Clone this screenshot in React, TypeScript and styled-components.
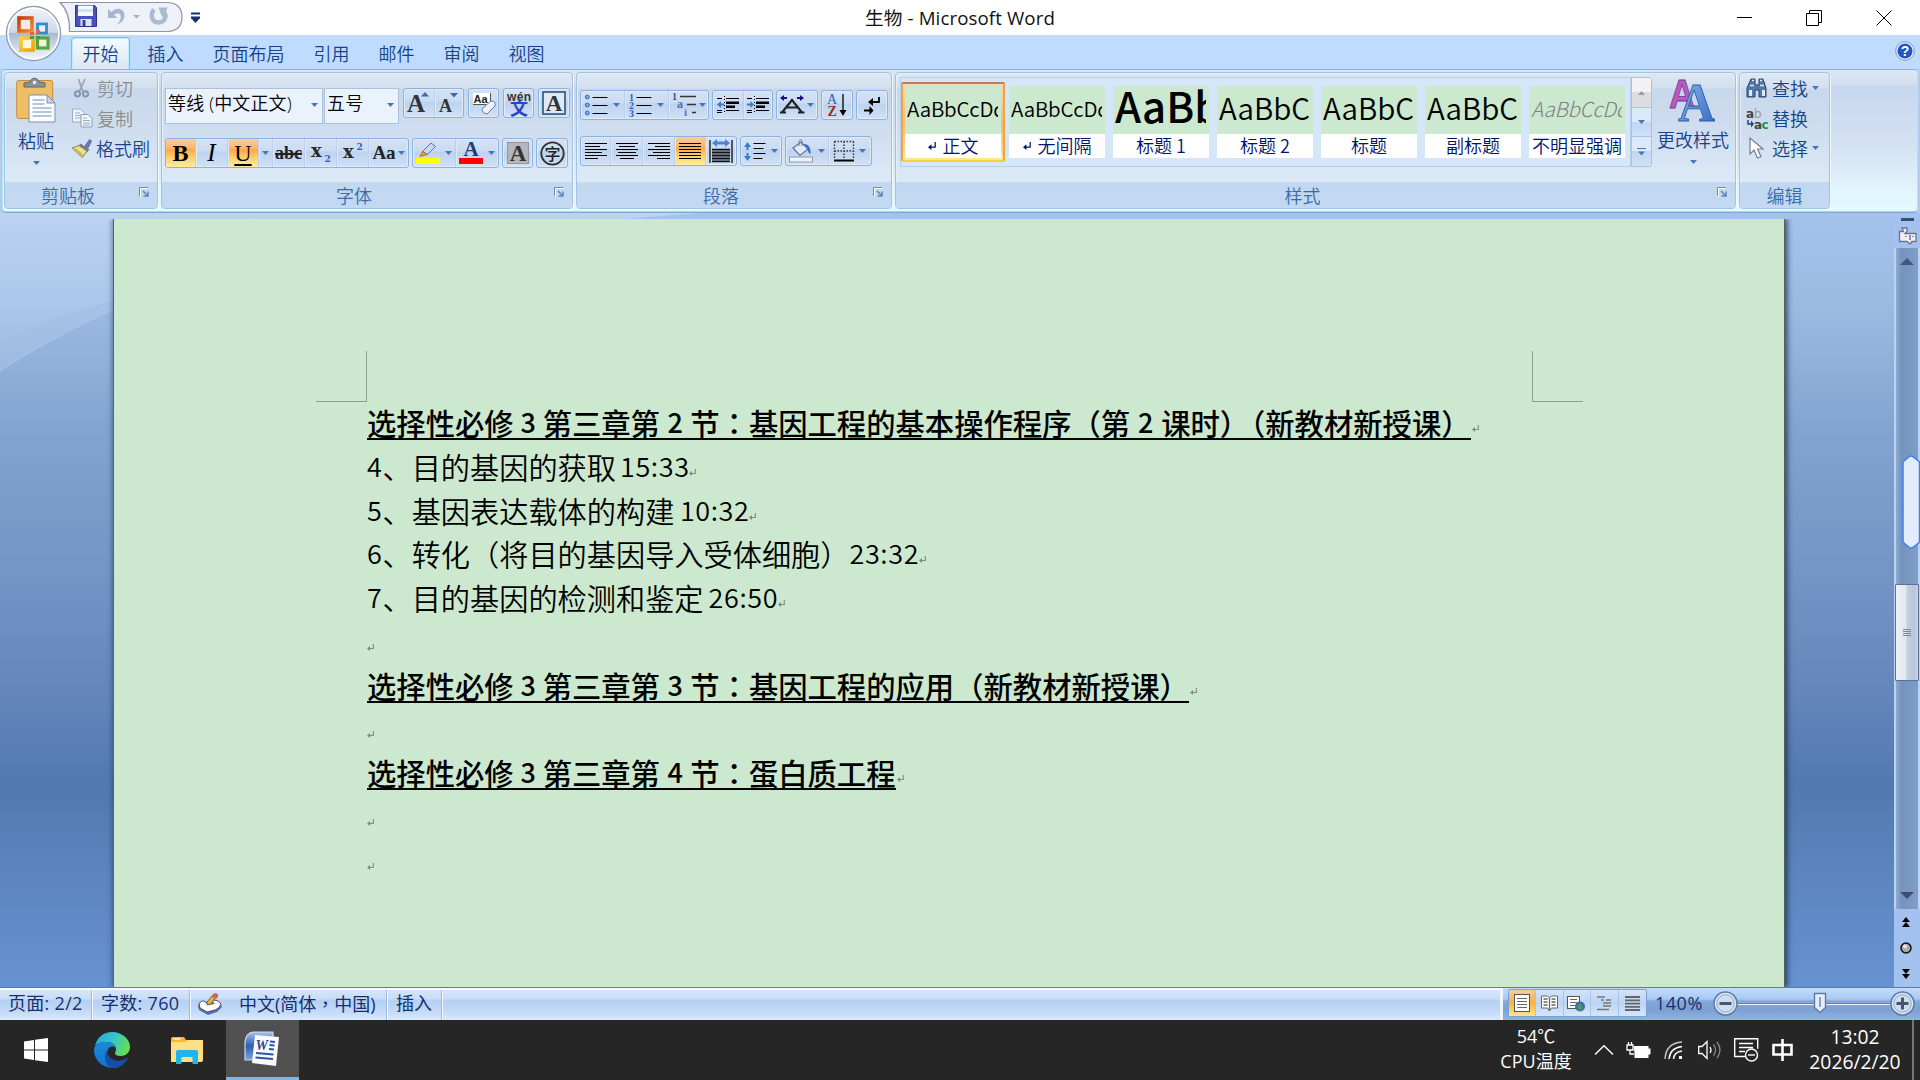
import React from 'react';
import styled, { createGlobalStyle, css } from 'styled-components';

const ui = `"Open Sans", "Noto Sans CJK SC", sans-serif`;
const cjk = `"Noto Sans CJK SC", "Noto Sans", sans-serif`;

const GlobalStyle = createGlobalStyle`
  * { box-sizing: border-box; }
  body { margin: 0; overflow: hidden; font-family: ${ui}; }
  svg { display: block; flex: none; overflow: visible; }
`;

const Screen = styled.div`
  position: relative;
  width: 1920px;
  height: 1080px;
  display: flex;
  flex-direction: column;
  overflow: hidden;
  background: #fff;
`;

/* ---------- title bar ---------- */
const TitleBar = styled.header`
  height: 35px;
  display: grid;
  grid-template-columns: 1fr 240px 1fr;
  background: #fff;
`;
const QuickAccess = styled.div`
  display: flex;
  align-items: flex-start;
  padding-left: 60px;
`;
const Title = styled.div`
  text-align: center;
  font: 18.7px/36px ${ui};
  letter-spacing: 0.1px;
  color: #111;
  white-space: nowrap;
`;
const WindowButtons = styled.div`
  display: flex;
  justify-content: flex-end;
  align-items: center;
  gap: 54px;
  padding: 0 28px 1px 0;
`;
const OfficeButton = styled.div`
  position: absolute;
  left: 5px;
  top: 5px;
  width: 57px;
  height: 57px;
`;

/* ---------- tabs ---------- */
const Tabs = styled.nav`
  height: 34px;
  display: flex;
  align-items: flex-end;
  gap: 6px;
  padding: 0 5px 0 71px;
  background: #bfdbff;
`;
const Tab = styled.div<{ $active?: boolean }>`
  height: 32px;
  padding: 0 10.5px;
  font: 18px/31px ${cjk};
  font-weight: 350;
  color: #15428b;
  border: 1px solid transparent;
  border-bottom: 0;
  ${(p) =>
    p.$active &&
    css`
      border-color: #8fb4e3;
      border-radius: 4px 4px 0 0;
      background: linear-gradient(#f4f9ff, #e6eff9 60%, #dbe6f4);
      box-shadow: inset 1px 1px 0 #b9f0f8, inset -1px 0 0 #b9f0f8;
    `}
`;
const HelpSlot = styled.div`
  margin-left: auto;
  height: 28px;
`;

/* ---------- ribbon ---------- */
const RibbonWrap = styled.section`
  height: 144px;
  padding: 0 2px;
  background: #b4cdee;
`;
const Ribbon = styled.div`
  height: 143px;
  display: flex;
  gap: 3px;
  padding: 2px 0 2px 1px;
  border: 1px solid #8db2e3;
  border-color: #8db2e3 #b5e6f3 #a5dbe8 #b5e6f3;
  border-radius: 4px;
  background: linear-gradient(#dce6f3 0, #d3dfef 15px, #c7d7ed 16px, #d3e1f2 75px, #e2f5fd 120px, #e3f8ff);
  box-shadow: 0 1px 1px #7ea2d0;
`;
const Group = styled.div<{ $w: number }>`
  width: ${(p) => p.$w}px;
  height: 137px;
  display: flex;
  flex-direction: column;
  border: 1px solid #a3c2e2;
  border-radius: 4px;
  box-shadow: 1px 1px 0 #eef7fe, inset 1px 1px 0 #e4eef9;
  background: linear-gradient(#dfe8f4 0, #d3dfee 15px, #c8d8ec 16px, #cddcee 50px, #dceaf7 110px);
  overflow: hidden;
`;
const GroupBody = styled.div<{ $pad?: string }>`
  flex: 1;
  display: flex;
  padding: ${(p) => p.$pad || '0'};
`;
const GroupLabel = styled.div`
  height: 26px;
  display: grid;
  grid-template-columns: 24px 1fr 24px;
  background: linear-gradient(#c1d8f0, #c2d9f1);
  font: 18px/27px ${cjk};
  font-weight: 350;
  color: #3e6aaa;
  text-align: center;
`;
const LabelText = styled.span`
  grid-column: 2;
  padding-right: 26px;
`;
const Column = styled.div<{ $gap?: number; $pad?: string; $w?: number }>`
  display: flex;
  flex-direction: column;
  gap: ${(p) => p.$gap || 0}px;
  padding: ${(p) => p.$pad || '0'};
  ${(p) => p.$w && `width: ${p.$w}px;`}
`;
const Row = styled.div<{ $gap?: number }>`
  display: flex;
  align-items: flex-start;
  gap: ${(p) => (p.$gap === undefined ? 3 : p.$gap)}px;
`;
const BigButton = styled.div<{ $w: number }>`
  width: ${(p) => p.$w}px;
  display: flex;
  flex-direction: column;
  align-items: center;
  font: 18px/26px ${cjk};
  font-weight: 350;
  color: #15428b;
  white-space: nowrap;
`;
const SmallButton = styled.div<{ $off?: boolean }>`
  height: 30px;
  display: flex;
  align-items: center;
  gap: 4px;
  font: 18px/30px ${cjk};
  font-weight: 350;
  white-space: nowrap;
  color: ${(p) => (p.$off ? '#8d8d8d' : '#15428b')};
`;
const Combo = styled.div<{ $w: number }>`
  width: ${(p) => p.$w}px;
  height: 36px;
  display: flex;
  justify-content: space-between;
  padding: 0 4px 0 2px;
  border: 1px solid #abc1de;
  background: #eaf2fb;
  font: 18px/28px "Open Sans", "Noto Sans CJK SC", sans-serif;
  font-weight: 350;
  letter-spacing: 0.15px;
  color: #000;
  white-space: nowrap;
  svg { margin-top: 14px; }
`;
const ButtonSet = styled.div`
  height: 30px;
  display: flex;
  border: 1px solid #8fb1de;
  border-radius: 3px;
  overflow: hidden;
  background: linear-gradient(#d3e1f3 0, #cbdcf2 12px, #bdd2ef 13px, #d0e1f7 28px);
  box-shadow: inset 0 0 0 1px #dfebf9;
`;
const Cell = styled.div<{ $w: number; $on?: boolean }>`
  width: ${(p) => p.$w}px;
  height: 28px;
  display: flex;
  align-items: center;
  justify-content: center;
  gap: 5px;
  & + & { border-left: 1px solid #b9cee9; box-shadow: inset 1px 0 0 #dde9f8; }
  ${(p) => p.$on && css`background: linear-gradient(#f7cfa0 0, #fdb76e 9px, #fda945 11px, #fed474 20px, #ffec9f 28px);`}
`;
const Glyph = styled.span<{ $size: number; $bold?: boolean; $italic?: boolean; $line?: string; $color?: string }>`
  font-family: "Liberation Serif", serif;
  font-size: ${(p) => p.$size}px;
  line-height: 26px;
  font-weight: ${(p) => (p.$bold ? 700 : 400)};
  font-style: ${(p) => (p.$italic ? 'italic' : 'normal')};
  text-decoration: ${(p) => p.$line || 'none'};
  text-decoration-thickness: 2px;
  text-underline-offset: 3px;
  color: ${(p) => p.$color || '#222'};
  white-space: nowrap;
`;

/* ---------- style gallery ---------- */
const Gallery = styled.div`
  display: flex;
  height: 90px;
  width: 731px;
  border: 1px solid #b7cfed;
  background: #d5e6f9;
`;
const StyleItem = styled.div<{ $on?: boolean }>`
  width: 104px;
  height: 80px;
  margin-top: 4px;
  padding: 4px;
  flex: none;
  border-radius: 2px;
  ${(p) =>
    p.$on &&
    css`
      padding: 2px;
      border: 2px solid;
      border-color: #b0825e #eba63f #fbcf3e #eba63f;
      background: linear-gradient(#fcd9ae, #fdb870 50%, #ffe78e);
    `}
`;
const Sample = styled.div<{ $size: number; $lh: number; $weight?: number; $italic?: boolean; $gray?: boolean; $track?: number }>`
  height: 48px;
  padding: 0 3px 0 2px;
  background: #cce8cf;
  span {
    display: block;
    overflow: hidden;
    width: 91px;
    height: 48px;
    font-family: ${cjk};
    font-size: ${(p) => p.$size}px;
    line-height: ${(p) => p.$lh}px;
    font-weight: ${(p) => p.$weight || 350};
    font-style: ${(p) => (p.$italic ? 'italic' : 'normal')};
    letter-spacing: ${(p) => p.$track || 0}px;
    color: ${(p) => (p.$gray ? '#808080' : '#000')};
  }
`;
const StyleName = styled.div`
  height: 24px;
  display: flex;
  align-items: center;
  justify-content: center;
  gap: 7px;
  background: #fff;
  font: 18px/22px ${cjk};
  font-weight: 350;
  color: #00156e;
  white-space: nowrap;
  span { height: 24px; }
`;
const GalleryNav = styled.div`
  width: 21px;
  height: 90px;
  display: grid;
  grid-template-rows: 30px 29px 30px;
  border: 1px solid #a9c3e6;
  border-radius: 0 3px 3px 0;
`;
const NavCell = styled.div<{ $off?: boolean }>`
  display: flex;
  align-items: center;
  justify-content: center;
  border-bottom: 1px solid #a9c3e6;
  background: ${(p) => (p.$off ? 'linear-gradient(#f2f2f3 50%, #dcdddf 50%)' : 'linear-gradient(#dbe9fa 50%, #c1d6f1 50%, #cfe0f6)')};
`;

/* ---------- workspace ---------- */
const Workspace = styled.main`
  position: relative;
  height: 774px;
  display: flex;
  padding-left: 113px;
  background: linear-gradient(#a4c2ec 0, #9dbae2 90px, #83a4d1 215px, #7293c4 370px, #6486ba 480px, #5b80b7 520px, #527ab0 575px, #5b84bc 650px, #6692d1 774px);
`;
const Curves = styled.svg`
  position: absolute;
  left: 0;
  top: 0;
`;
const Paper = styled.article`
  position: relative;
  width: 1672px;
  height: 768px;
  margin-top: 6px;
  padding: 181px 0 0 253px;
  background: #cce8cf;
  border-left: 1px solid #53646f;
  border-right: 1px solid #55605a;
  box-shadow: 3px 0 5px rgba(20, 40, 70, 0.65), -2px 0 4px rgba(30, 60, 110, 0.35);
  clip-path: inset(0 -12px 0 -8px);
`;
const Corner = styled.div<{ $right?: boolean }>`
  position: absolute;
  top: 132px;
  left: ${(p) => (p.$right ? 1418 : 202)}px;
  width: 51px;
  height: 51px;
  border-bottom: 1px solid #8ba18d;
  ${(p) => (p.$right ? 'border-left: 1px solid #8ba18d;' : 'border-right: 1px solid #8ba18d;')}
`;
const Line = styled.p`
  margin: 0;
  height: 43.75px;
  display: flex;
  font: 29.2px/44.5px ${cjk};
  font-weight: 350;
  color: #000;
  white-space: pre;
`;
const Head = styled.strong`
  height: 40px;
  display: flex;
  font-size: 29.33px;
  font-weight: 500;
  border-bottom: 2px solid #000;
`;
const Fixed = styled.span<{ $w: number; $align?: string; $size?: number; $jp?: boolean }>`
  width: ${(p) => p.$w}px;
  display: flex;
  justify-content: ${(p) => p.$align || 'center'};
  ${(p) => p.$size && `font-size: ${p.$size}px;`}
  ${(p) => p.$jp && `font-family: "Noto Sans CJK JP", sans-serif;`}
`;
const Time = styled.span<{ $gap: number }>`
  width: ${(p) => 68 + p.$gap}px;
  padding-left: ${(p) => p.$gap}px;
  font-size: 27px;
  letter-spacing: 0.6px;
`;
const MarkSlot = styled.span`
  padding: 25px 0 0 1px;
`;

/* ---------- vertical scroll bar ---------- */
const ScrollColumn = styled.aside`
  position: relative;
  margin-left: auto;
  width: 26px;
  display: flex;
  flex-direction: column;
  align-items: center;
  background: #a4c2ef;
`;
const ScrollTop = styled.div`
  height: 35px;
  padding-top: 5px;
  display: flex;
  flex-direction: column;
  align-items: center;
  gap: 6px;
`;
const Track = styled.div`
  width: 26px;
  height: 661px;
  display: flex;
  flex-direction: column;
  align-items: center;
  padding: 10px 0;
  border: solid #b9d3f6;
  border-width: 0 2px;
  background: linear-gradient(90deg, #8fabd0, #7593bd 25%, #7f9dc6);
`;
const Thumb = styled.div`
  width: 24px;
  height: 97px;
  margin: 319px 0 auto;
  display: flex;
  align-items: center;
  justify-content: center;
  border: 1px solid #5f6f98;
  border-radius: 1px;
  background: linear-gradient(90deg, #eef0f4, #e1e8ef 45%, #c3d0de 50%, #b7c6da 85%, #ccd5e4);
`;
const ScrollFoot = styled.div`
  flex: 1;
  display: flex;
  flex-direction: column;
  align-items: center;
  gap: 15px;
  padding: 8px 2px 0 0;
`;
const SidePill = styled.svg`
  position: absolute;
  left: 8px;
  top: 242px;
`;

/* ---------- status bar ---------- */
const StatusBar = styled.footer`
  height: 33px;
  display: flex;
  border-top: 1px solid #567db0;
  background: #cfe1f7;
`;
const StatusLeft = styled.div`
  width: 1500px;
  display: flex;
  border-top: 2px solid #f6faff;
  background: linear-gradient(#d5e5fa 0, #c9ddf8 9px, #b5d0f4 10px, #c4daf7 22px, #d9e9fc 30px);
`;
const StatusItem = styled.div<{ $w: number; $pad?: number }>`
  width: ${(p) => p.$w}px;
  padding: 0 0 3px ${(p) => (p.$pad === undefined ? 9 : p.$pad)}px;
  display: flex;
  align-items: center;
  gap: 17px;
  border-right: 1px solid #9bbbe3;
  box-shadow: 1px 0 0 #f2f8ff;
  font: 18px/27px ${ui};
  letter-spacing: ${(p) => (p.$w < 100 && p.$w > 60 ? 0.3 : 0)}px;
  color: #15306e;
  white-space: nowrap;
`;
const CenteredComma = styled.span`
  font-family: "Noto Sans CJK TC", sans-serif;
`;
const StatusRight = styled.div`
  flex: 1;
  display: flex;
  align-items: center;
  padding: 0 5px 2px 5px;
  border-left: 3px solid #edf5ff;
  background: linear-gradient(#c3dcfb 0, #a9c9f3 11px, #85a9dc 13px, #7d9fd2 22px, #8fb4e2 32px);
`;
const ViewSet = styled.div`
  height: 28px;
  width: 139px;
  display: grid;
  grid-template-columns: repeat(5, 1fr);
  border: 1px solid #7b9fd3;
  border-radius: 2px;
  background: linear-gradient(#d3e4fa, #bcd4f4 50%, #d5e6fb);
`;
const ViewCell = styled.div<{ $on?: boolean }>`
  display: flex;
  align-items: center;
  justify-content: center;
  border-right: 1px solid #a9c4ea;
  &:last-child { border-right: 0; }
  ${(p) => p.$on && css`background: linear-gradient(#f0cfa2, #f3b659 40%, #f8b53a 50%, #ffe395);`}
`;
const ZoomText = styled.span`
  width: 66px;
  padding-left: 8px;
  font: 18px/28px ${ui};
  letter-spacing: 0.5px;
  color: #15306e;
`;
const ZoomSlider = styled.div`
  display: flex;
  align-items: center;
`;

/* ---------- taskbar ---------- */
const Taskbar = styled.div`
  height: 60px;
  display: flex;
  background: #262626;
  color: #fff;
`;
const Task = styled.div<{ $w: number; $on?: boolean; $pad?: string }>`
  width: ${(p) => p.$w}px;
  display: flex;
  align-items: center;
  justify-content: center;
  padding: ${(p) => p.$pad || '0'};
  ${(p) => p.$on && 'background: #505050; border-bottom: 3px solid #76b9ed;'}
`;
const Tray = styled.div`
  margin-left: auto;
  display: flex;
  align-items: center;
`;
const TrayText = styled.div<{ $w: number; $size: number }>`
  width: ${(p) => p.$w}px;
  padding-bottom: 2px;
  text-align: center;
  font: ${(p) => p.$size}px/25px ${ui};
  white-space: nowrap;
`;
const TrayIcons = styled.div`
  display: flex;
  align-items: center;
  width: 198px;
  margin: 0 5px 0 19px;
  justify-content: space-between;
`;
const ShowDesktop = styled.div`
  width: 8px;
  height: 60px;
  border-left: 2px solid #757575;
`;

/* ---------- drawings ---------- */
const Caret = ({ color = '#4a76b8', up = false }: { color?: string; up?: boolean }) => (
  <svg width="7" height="4" viewBox="0 0 7 4">
    <path d={up ? 'M0 4h7L3.5 0z' : 'M0 0h7L3.5 4z'} fill={color} />
  </svg>
);

const Pilcrow = ({ color = '#808a82', size = 7 }: { color?: string; size?: number }) => (
  <svg width={size} height={size} viewBox="0 0 7 7">
    <path d="M6.300 0v4.500H1" stroke={color} fill="none" strokeWidth="1.100" />
    <path d="M0 4.500L3 2v5z" fill={color} />
  </svg>
);

const Launcher = () => (
  <svg width="11" height="11" viewBox="0 0 11 11" style={{ margin: '5px 0 0 6px' }}>
    <path d="M.5 9V.5H9" fill="none" stroke="#6a8dbb" />
    <path d="M1.500 9.500v-8H9" fill="none" stroke="#fff" />
    <path d="M4 4l4 4M9 4.500V9H4.500" fill="none" stroke="#5d84b8" strokeWidth="1.500" />
  </svg>
);

const Lines = ({ rows, color = '#000', w = 22 }: { rows: [number, number][]; color?: string; w?: number }) => (
  <svg width={w} height="17" viewBox={`0 0 ${w} 17`} shapeRendering="crispEdges">
    {rows.map(([a, b], i) => (
      <rect key={i} x={a} y={i * 3} width={b - a} height="1.2" fill={color} />
    ))}
  </svg>
);

const OfficeLogo = () => (
  <svg width="57" height="57" viewBox="0 0 57 57">
    <defs>
      <linearGradient id="orb" x1="0" y1="0" x2="0" y2="1">
        <stop offset="0" stopColor="#f4f6f9" />
        <stop offset=".48" stopColor="#ccd6e4" />
        <stop offset=".5" stopColor="#a9bbd4" />
        <stop offset="1" stopColor="#f6fafe" />
      </linearGradient>
      <linearGradient id="lr" x1="0" y1="0" x2="1" y2="1"><stop offset="0" stopColor="#c9370b" /><stop offset="1" stopColor="#f58b2e" /></linearGradient>
      <linearGradient id="ly" x1="0" y1="0" x2="1" y2="1"><stop offset="0" stopColor="#fcd02c" /><stop offset="1" stopColor="#f2a20d" /></linearGradient>
    </defs>
    <circle cx="28.500" cy="28.500" r="27" fill="url(#orb)" stroke="#8a9bb5" strokeWidth="1.400" />
    <circle cx="28.500" cy="28.500" r="25.500" fill="none" stroke="#fff" strokeWidth="1.600" />
    <rect x="14" y="13" width="13" height="13" fill="#f5ebe6" stroke="url(#lr)" strokeWidth="3.600" />
    <rect x="32.500" y="19" width="9" height="9" fill="#e6f3fb" stroke="#2a8fd0" strokeWidth="2.800" />
    <rect x="16" y="33" width="12" height="12" fill="#fdf6df" stroke="url(#ly)" strokeWidth="3.600" />
    <rect x="32.500" y="33" width="10.500" height="10" fill="#eaf5e2" stroke="#5aa53a" strokeWidth="3.200" />
    <path d="M25 27h4v3h-4zM31 25h4v3h-4z" fill="#e8662a" />
    <path d="M25 31h4v3h-4zM31 31h4v3h-4z" fill="#3d9a5f" />
  </svg>
);

const QuickIcons = () => (
  <svg width="146" height="34" viewBox="60 0 146 34">
    <path d="M60 2.500H168q14 1 14 14.500T168 31.500H69.500Q70 12 60 2.500z" fill="#eef2f8" stroke="#8b95a3" strokeWidth="1.200" />
    <path d="M75.500 5.500h19l2 2v19H75.500z" fill="#4a50bc" stroke="#2f3588" />
    <rect x="78" y="5.500" width="15" height="10.500" fill="#f5f8fc" />
    <path d="M78 9h15v3H78z" fill="#cfe0f2" />
    <rect x="80.500" y="19" width="11" height="7" fill="#dfe4ee" />
    <rect x="82.500" y="20" width="3" height="6" fill="#3a3f8f" />
    <path d="M108 9v9h9.500l-3.300-3c3.500-3.500 7-1.500 6.500 2.500-.3 3-2.200 5.500-4.700 7.500 5-1.500 8.500-5 8.500-9.500 0-7-8-9-13-3.500z" fill="#a5b8d0" />
    <path d="M133 15h7l-3.500 3.500z" fill="#a8afb9" />
    <path d="M154 9.500c-4.500 5.500-2 13 4.500 13s9-6.500 5-11" fill="none" stroke="#a9bbd2" strokeWidth="4.400" />
    <path d="M158.500 7.500h9l-1.500 4-4 5.500z" fill="#a9bbd2" />
    <path d="M191 13.500h9M191 17.500h9" stroke="#15306e" strokeWidth="2" />
    <path d="M191 18h9l-4.500 5z" fill="#15306e" />
  </svg>
);

const PasteIcon = () => (
  <svg width="40" height="45" viewBox="0 0 40 45">
    <rect x=".7" y="2.500" width="36" height="38" rx="2" fill="#eebf62" stroke="#c08f3e" />
    <path d="M8 9V5l6-1c1-5 8-5 9 0l6 1v4z" fill="#8c939e" stroke="#5d646f" />
    <circle cx="18.500" cy="4.500" r="1.700" fill="#f5f5f5" />
    <path d="M13 17h18l8 8v19H13z" fill="#fbfcff" stroke="#7c8fb5" />
    <path d="M31 17v8h8z" fill="#c9d6ea" stroke="#7c8fb5" />
    <path d="M16.500 22h12M16.500 26h12M16.500 30h19M16.500 34h19M16.500 38h19" stroke="#9fb3d0" strokeWidth="1.300" />
  </svg>
);

const CutIcon = () => (
  <svg width="15" height="20" viewBox="0 0 15 20" fill="none">
    <path d="M4.500 1l4.500 13M11 1L5.500 13" stroke="#9aa6b8" strokeWidth="1.800" />
    <circle cx="3.500" cy="15.800" r="2.600" stroke="#8496b0" strokeWidth="2" />
    <circle cx="11.500" cy="15.800" r="2.600" stroke="#8496b0" strokeWidth="2" />
  </svg>
);

const CopyIcon = () => (
  <svg width="21" height="20" viewBox="0 0 21 20">
    <path d="M.5 1h8l4 4v9H.500z" fill="#eef3fa" stroke="#9cacc5" />
    <path d="M3 5h5M3 7.500h7M3 10h6" stroke="#9cacc5" />
    <path d="M9 6.500h7l4 4v8.500H9z" fill="#f2f6fb" stroke="#8c9fbd" />
    <path d="M11 10h4M11 12.500h7M11 15h7M11 17h7" stroke="#9cacc5" />
  </svg>
);

const BrushIcon = () => (
  <svg width="20" height="19" viewBox="0 0 20 19">
    <path d="M13 7l4.500-6.500 2 1.500L16 9z" fill="#7376c9" stroke="#4a4f9c" strokeWidth=".8" />
    <path d="M8.500 4.500l9 6-2.500 3-9-6z" fill="#6f7b88" />
    <path d="M7 6.500l8 5.500-4.500 6.500L0 9z" fill="#ecdf96" stroke="#8f8243" />
    <path d="M3 9.500l8 7" stroke="#c3ad4d" strokeWidth="1.600" />
  </svg>
);

const ClearFormat = () => (
  <svg width="24" height="24" viewBox="0 0 24 24">
    <path d="M1 2h17v11H1z" fill="#fff" />
    <path d="M18.500 2v10M1 13.500h13" fill="none" stroke="#555" />
    <text x="1.500" y="11.500" fontFamily="Liberation Sans" fontSize="11" fontWeight="700" fill="#222">Aa</text>
    <path d="M10 18l9-8q5 0 4 5l-8 8q-5-1-5-5z" fill="#eef1fa" stroke="#6b7aa6" />
  </svg>
);

const Phonetic = () => (
  <svg width="26" height="26" viewBox="0 0 26 26">
    <text x="1" y="11" fontFamily="Liberation Sans" fontSize="12" fontWeight="700" textLength="24" fill="#333">wén</text>
    <text x="4" y="25" fontFamily="Noto Sans CJK SC" fontSize="18" fontWeight="700" textLength="18" fill="#2c45c4">文</text>
  </svg>
);

const CharBorder = () => (
  <svg width="24" height="24" viewBox="0 0 24 24">
    <rect x="1" y="1" width="22" height="22" fill="#dfe8f5" stroke="#3d6186" strokeWidth="1.800" />
    <text x="12" y="20" textAnchor="middle" fontFamily="Liberation Serif" fontSize="23" fontWeight="700" fill="#333">A</text>
  </svg>
);

const CharShade = () => (
  <svg width="22" height="22" viewBox="0 0 22 22">
    <rect x=".5" y=".5" width="21" height="21" fill="#b5b6ba" stroke="#96979b" />
    <text x="11" y="19" textAnchor="middle" fontFamily="Liberation Serif" fontSize="23" fontWeight="700" fill="#333">A</text>
  </svg>
);

const CircledChar = () => (
  <svg width="25" height="25" viewBox="0 0 25 25">
    <circle cx="12.500" cy="12.500" r="11.200" fill="none" stroke="#333" strokeWidth="1.800" />
    <text x="12.500" y="18.500" textAnchor="middle" fontFamily="Noto Sans CJK SC" fontSize="16" fontWeight="500" fill="#222">字</text>
  </svg>
);

const GrowFont = ({ size, up }: { size: number; up?: boolean }) => (
  <svg width="24" height="24" viewBox="0 0 24 24">
    <text x={up ? 0 : 2} y={up ? 21 : 20.5} fontFamily="Liberation Serif" fontSize={size} fontWeight="700" fill="#333">A</text>
    <path d={up ? 'M14 5.500h8L18 1z' : 'M13 2h8l-4 4.500z'} fill="#3f66b0" />
  </svg>
);

const Highlighter = () => (
  <svg width="24" height="24" viewBox="0 0 24 24">
    <rect x="0" y="17" width="24" height="6" fill="#ff0" />
    <path d="M15 2l4.500 3.500-8 8-5-3z" fill="#c6d8f0" stroke="#5b77a6" />
    <path d="M6.500 10.500l5 3-7.500 1.800z" fill="#e9a640" stroke="#8d6425" strokeWidth=".8" />
  </svg>
);

const FontColor = () => (
  <svg width="24" height="24" viewBox="0 0 24 24">
    <rect x="0" y="17" width="24" height="6" fill="#f00" />
    <text x="12" y="15" textAnchor="middle" fontFamily="Liberation Serif" fontSize="21" fontWeight="700" fill="#1d3c7c">A</text>
  </svg>
);

const ListIcon = ({ numbered }: { numbered?: boolean }) => (
  <svg width="23" height="23" viewBox="0 0 23 23">
    {[3, 11, 19].map((y, i) => (
      <g key={y}>
        {numbered ? (
          <text x="0" y={y + 3.5} fontFamily="Liberation Serif" fontSize="10" fontWeight="700" fill="#2d62b8">{i + 1}</text>
        ) : (
          <circle cx="2.300" cy={y} r="1.900" fill="#7fb0ec" stroke="#2d62b8" />
        )}
        <path d={`M7.500 ${y + 0.5}h15`} stroke="#000" />
      </g>
    ))}
  </svg>
);

const MultiLevel = () => (
  <svg width="25" height="24" viewBox="0 0 25 24">
    <text x="0" y="7" fontFamily="Liberation Serif" fontSize="10" fontWeight="700" fill="#2d4f8c">1</text>
    <text x="5" y="15" fontFamily="Liberation Serif" fontSize="12" fontWeight="700" fill="#4d6ea8">a</text>
    <text x="12" y="23" fontFamily="Liberation Serif" fontSize="11" fontWeight="700" fill="#4d78c8">i</text>
    <path d="M8 3.500h16M15 11.500h9M20 19.500h4" stroke="#333" strokeWidth="1.600" />
  </svg>
);

const Indent = ({ out }: { out?: boolean }) => (
  <svg width="22" height="18" viewBox="0 0 22 18">
    <path d="M0 2.500h5M9 2.500h13M0 14.500h5M9 14.500h13M0 16.500h5" stroke="#000" strokeWidth="1.200" />
    <path d="M9 5.500h13v2.500H9zM9 9.500h9v2.500H9z" fill="#000" />
    <path d="M7.500 0v18" stroke="#000" strokeDasharray="1 2" />
    <path d={out ? 'M0 8.500l4-3.500v2.500h3v2H4V12z' : 'M7 8.500L3.500 5v2.500H0v2h3.500V12z'} fill="#3b7ad0" />
  </svg>
);

const AsianLayout = () => (
  <svg width="25" height="20" viewBox="0 0 25 20">
    <path d="M2 17.500L12 5l10 12.500M6.500 12.500h11M0 17.500h6M18 17.500h6.500" fill="none" stroke="#222" strokeWidth="2.200" />
    <path d="M0 3l4-3v2h3v2H4v2zM24 3l-4-3v2h-3v2h3v2z" fill="#10108c" />
  </svg>
);

const SortIcon = () => (
  <svg width="20" height="24" viewBox="0 0 20 24">
    <text x="0" y="11" fontFamily="Liberation Serif" fontSize="14" fill="#2a62b5">A</text>
    <text x=".5" y="23" fontFamily="Liberation Serif" fontSize="14" fontWeight="700" fill="#a32525">Z</text>
    <path d="M16 1v19" stroke="#000" strokeWidth="1.300" />
    <path d="M12.500 17h7L16 23z" fill="#000" />
  </svg>
);

const ShowMarks = () => (
  <svg width="17" height="20" viewBox="0 0 17 20">
    <path d="M15 2v5H7" fill="none" stroke="#000" strokeWidth="1.800" />
    <path d="M4 7l5-4v8zM9.500 15.500l-4-4.500v9z" fill="#000" />
    <path d="M0 15.500h7" stroke="#000" strokeWidth="1.800" />
  </svg>
);

const Distribute = () => (
  <svg width="24" height="24" viewBox="0 0 24 24">
    <path d="M1 1v23M23 1v23" stroke="#333" strokeWidth="1.600" />
    <path d="M3 4l5-4v2.500h8V0l5 4-5 4V5.500H8V8z" fill="#4d84cf" />
    <path d="M3 10h18v13H3z" fill="#7d8da5" />
    <path d="M3 10.500h18M3 13.500h18M3 16.500h18M3 19.500h18M3 22.500h18" stroke="#111" strokeWidth="1.300" />
  </svg>
);

const LineSpacing = () => (
  <svg width="22" height="19" viewBox="0 0 22 19">
    <path d="M9.500 1.500h12M9.500 6.500h10M9.500 11.500h12M9.500 16.500h9" stroke="#000" strokeWidth="1.200" />
    <path d="M0 5l3.500-5L7 5H4.500v3h-2V5zM0 14l3.500 5L7 14H4.500v-3h-2v3z" fill="#3b7ad0" />
  </svg>
);

const Bucket = () => (
  <svg width="24" height="24" viewBox="0 0 24 24">
    <rect x=".5" y="18" width="23" height="5" fill="#eef3fb" stroke="#8d9ab0" />
    <path d="M4 9l8-6 7 7-8 6.500z" fill="#e1eaf7" stroke="#5f7596" strokeWidth="1.200" />
    <path d="M10 7V2q2-3 3 0v5" fill="none" stroke="#6f7f98" />
    <path d="M14 5q8-1 7.500 10-3-1-3-6z" fill="#2d6fd0" />
  </svg>
);

const Borders = () => (
  <svg width="20" height="21" viewBox="0 0 20 21">
    <path d="M.5.500h19M.5.500v18M19.500.500v18M10 .500v18M.5 10h19" fill="none" stroke="#333" strokeWidth="1.400" strokeDasharray="1.500 1.500" />
    <path d="M0 19.500h20" stroke="#000" strokeWidth="2" />
  </svg>
);

const ChangeStyles = () => (
  <svg width="46" height="44" viewBox="0 0 46 44">
    <defs>
      <linearGradient id="csb" x1="0" y1="0" x2="1" y2="1"><stop offset="0" stopColor="#8fc0f2" /><stop offset="1" stopColor="#2f63c0" /></linearGradient>
    </defs>
    <text x="-1" y="30" fontFamily="Liberation Sans" fontSize="41" fontWeight="700" textLength="26" lengthAdjust="spacingAndGlyphs" fill="#b45cc0" stroke="#7d3590" strokeWidth=".8">A</text>
    <text x="8" y="43" fontFamily="Liberation Serif" fontSize="54" fontWeight="700" textLength="37" lengthAdjust="spacingAndGlyphs" fill="url(#csb)" stroke="#2f5aa5" strokeWidth=".8">A</text>
  </svg>
);

const Binoculars = () => (
  <svg width="22" height="20" viewBox="0 0 22 20">
    <path d="M5 1h4v5l1 1h2l1-1V1h4l3 9v9h-7v-7H9v7H1v-9z" fill="#5577a8" stroke="#27436f" />
    <path d="M3 12h3v6H3zM16 12h3v6h-3z" fill="#dfe9f6" />
    <path d="M6 2.500h2M14 2.500h2M4 7.500h4M14 7.500h4" stroke="#dfe9f6" strokeWidth="1.500" />
  </svg>
);

const ReplaceIcon = () => (
  <svg width="22" height="23" viewBox="0 0 22 23" fontFamily="DejaVu Sans" fontWeight="700">
    <text x="0" y="11" fontSize="12" fill="#444">a</text>
    <text x="8" y="11" fontSize="12" fontWeight="400" fill="#999">b</text>
    <text x="8" y="22" fontSize="12" fill="#444">a</text>
    <text x="15.500" y="22" fontSize="12" fill="#1a9a2c">c</text>
    <path d="M2 13v4h4" fill="none" stroke="#1f4283" strokeWidth="1.500" />
    <path d="M5 13.500v7l3-3.500z" fill="#1f4283" />
  </svg>
);

const SelectIcon = () => (
  <svg width="22" height="22" viewBox="-3 0 22 22">
    <path d="M1 1v16l4-4 3.500 8 3.500-1.500-3.500-7.500H14z" fill="#fff" stroke="#6e7f9b" strokeWidth="1.200" />
  </svg>
);

const ScriptIcon = ({ sup }: { sup?: boolean }) => (
  <svg width="20" height="22" viewBox="0 0 20 22" fontFamily="DejaVu Serif" fontWeight="700">
    <text x="0" y={sup ? 16 : 15} fontSize="18" fill="#2a2a2a">x</text>
    <text x="13.500" y={sup ? 8 : 20} fontSize="9" fill="#2d62b8">2</text>
  </svg>
);

const ZoomKnob = ({ plus }: { plus?: boolean }) => (
  <svg width="25" height="25" viewBox="0 0 25 25">
    <circle cx="12.500" cy="12.500" r="11.500" fill="#e2ebf7" stroke="#5c7cab" strokeWidth="1.600" />
    <circle cx="12.500" cy="12.500" r="8.800" fill="#cfdcee" stroke="#8ba5cb" />
    <path d={plus ? 'M6.500 12.500h12M12.500 6.500v12' : 'M6.500 12.500h12'} stroke="#44566f" strokeWidth="3" />
  </svg>
);

const Proofing = () => (
  <svg width="24" height="22" viewBox="0 0 24 22">
    <path d="M0 13l2-4h20l2 5-5 5-9 3-9-5z" fill="#4f6cbc" />
    <path d="M1 11q2-4 5-3l4 3 6-4q5 0 7 4-1 4-6 6l-8 2-7-4z" fill="#fff" stroke="#444" strokeWidth=".9" />
    <path d="M10 12l7-1-4-5-4 3z" fill="#333" fillOpacity=".7" />
    <path d="M9 9l6-7 3 2-5 7-4 1z" fill="#e3b545" stroke="#5b4a20" strokeWidth=".8" />
    <path d="M15 1l2-1 3 1v3l-2 2-4-2z" fill="#c9675a" />
  </svg>
);

const EdgeIcon = () => (
  <svg width="36" height="36" viewBox="0 0 36 36">
    <defs>
      <linearGradient id="ea" x1="0" y1=".2" x2="1" y2=".5"><stop offset="0" stopColor="#2aa5de" /><stop offset=".5" stopColor="#35c3cb" /><stop offset="1" stopColor="#66e04e" /></linearGradient>
      <linearGradient id="eb" x1="0" y1="0" x2="0" y2="1"><stop offset="0" stopColor="#1d8ad8" /><stop offset="1" stopColor="#1271cf" /></linearGradient>
    </defs>
    <path d="M1 14C3 5 10 0 18 0c10 0 18 7 18 15 0 6-5 9-9 9-4 0-6-1-6-3 0-1 1-2 1-4 0-4-4-7-9-7-6 0-11 2-12 4z" fill="url(#ea)" />
    <path d="M0 18C0 12 6 10 12 10c5 0 9 2 10 6-2-2-5-2-7 0-4 5-2 12 3 16 3 2 6 3 7 3C12 39 0 30 0 18z" fill="url(#eb)" />
    <path d="M15 16c-3 4-1 9 3 11 5 3 11 2 15-1 1 0 1 1 0 2-4 6-9 8-15 8C10 34 9 20 15 16z" fill="#144fa5" />
  </svg>
);

const FolderIcon = () => (
  <svg width="32" height="27" viewBox="0 0 32 27">
    <path d="M0 1.500Q0 0 1.500 0H13l2 3h15q2 0 2 2v19H0z" fill="#f3bb2d" />
    <path d="M0 5h14l3-2h15v20q0 2-2 2H0z" fill="#ffdf83" />
    <path d="M2.500 2h7" stroke="#fff" strokeWidth="1.300" />
    <path d="M5 27V15q0-2 2-2h18q2 0 2 2v12h-5.500v-7h-11v7z" fill="#1fb4ee" />
  </svg>
);

const WordIcon = () => (
  <svg width="36" height="36" viewBox="0 0 36 36">
    <defs>
      <linearGradient id="wg" x1="0" y1="0" x2="0" y2="1"><stop offset="0" stopColor="#a8c2ea" /><stop offset=".5" stopColor="#2f5db3" /><stop offset="1" stopColor="#7fa3dd" /></linearGradient>
    </defs>
    <path d="M9 1h20v28H1V11Q2 2 9 1z" fill="url(#wg)" stroke="#c9d8f0" strokeWidth="1.200" />
    <path d="M11 4l24 2-3 29-24-3z" fill="#f8fafd" />
    <text x="11.500" y="19" fontFamily="Liberation Serif" fontSize="14" fontWeight="700" fontStyle="italic" fill="#22478f">W</text>
    <path d="M26 10.500l5 .5M25.500 14l5 .5M25 18l5 .5M12 22l17.500 1.500M11.500 26.500l17.500 1.500" stroke="#2c55a5" strokeWidth="2" />
  </svg>
);

const Mark = ({ flush }: { flush?: boolean }) => (
  <MarkSlot style={flush ? { paddingLeft: 0 } : undefined}><Pilcrow /></MarkSlot>
);

const styleItems: { name: string; text: string; size: number; lh: number; weight?: number; mark?: boolean; italic?: boolean; gray?: boolean; track?: number }[] = [
  { name: '正文', text: 'AaBbCcDd', size: 20.5, lh: 45, weight: 350, mark: true, track: -0.2 },
  { name: '无间隔', text: 'AaBbCcDd', size: 20.5, lh: 45, weight: 350, mark: true, track: -0.2 },
  { name: '标题 1', text: 'AaBb', size: 42, lh: 38, weight: 500 },
  { name: '标题 2', text: 'AaBbC', size: 29.5, lh: 42, weight: 350 },
  { name: '标题', text: 'AaBbC', size: 29.5, lh: 42, weight: 350 },
  { name: '副标题', text: 'AaBbC', size: 29.5, lh: 42, weight: 350 },
  { name: '不明显强调', text: 'AaBbCcDd', size: 20.5, lh: 45, weight: 300, italic: true, gray: true, track: -0.2 },
];

const items = [
  { n: '4', text: '目的基因的获取', time: '15:33', gap: 4 },
  { n: '5', text: '基因表达载体的构建', time: '10:32', gap: 5.5 },
  { n: '6', text: '转化（将目的基因导入受体细胞）', time: '23:32', gap: 0 },
  { n: '7', text: '目的基因的检测和鉴定', time: '26:50', gap: 5 },
];

const Heading = ({ section, children }: { section: string; children: React.ReactNode }) => (
  <Line>
    <Head>
      选择性必修<Fixed $w={29} $size={27}>3</Fixed>第三章第<Fixed $w={30.3} $size={27}>{section}</Fixed>节
      <Fixed $w={29.3} $jp>：</Fixed>
      {children}
    </Head>
    <Mark />
  </Line>
);

const GroupFooter = ({ children }: { children: string }) => (
  <GroupLabel>
    <LabelText>{children}</LabelText>
    <Launcher />
  </GroupLabel>
);

export default function App() {
  const full: [number, number] = [0, 22];
  return (
    <Screen>
      <GlobalStyle />
      <TitleBar>
        <QuickAccess><QuickIcons /></QuickAccess>
        <Title>生物 - Microsoft Word</Title>
        <WindowButtons>
          <svg width="15" height="15" viewBox="0 0 15 15"><path d="M0 7.500h15" stroke="#000" /></svg>
          <svg width="16" height="16" viewBox="0 0 16 16" fill="none" stroke="#000"><path d="M.5 3.500h12v12H.500zM3.500 3.500v-3h12v12h-3" /></svg>
          <svg width="16" height="16" viewBox="0 0 16 16" stroke="#000"><path d="M.5.500l15 15M15.500.500l-15 15" /></svg>
        </WindowButtons>
      </TitleBar>

      <Tabs>
        <Tab $active>开始</Tab>
        {['插入', '页面布局', '引用', '邮件', '审阅', '视图'].map((t) => <Tab key={t}>{t}</Tab>)}
        <HelpSlot>
          <svg width="20" height="20" viewBox="0 0 20 20">
            <circle cx="10" cy="10" r="9.300" fill="#f2f6fc" stroke="#7d93bd" />
            <circle cx="10" cy="10" r="7.600" fill="#2455c4" />
            <text x="10" y="15" textAnchor="middle" fontFamily="Liberation Sans" fontWeight="700" fontSize="14" fill="#fff">?</text>
          </svg>
        </HelpSlot>
      </Tabs>
      <OfficeButton><OfficeLogo /></OfficeButton>

      <RibbonWrap>
        <Ribbon>
          <Group $w={154}>
            <GroupBody>
              <BigButton $w={62}>
                <svg width="40" height="5" />
                <PasteIcon />
                <span style={{ marginTop: 4 }}>粘贴</span>
                <svg width="7" height="8" />
                <Caret />
              </BigButton>
              <Column $pad="0 0 0 5px">
                <SmallButton $off><svg width="2" height="1" style={{ marginRight: -4 }} /><CutIcon /><i />剪切</SmallButton>
                <SmallButton $off><CopyIcon />复制</SmallButton>
                <SmallButton><BrushIcon />格式刷</SmallButton>
              </Column>
            </GroupBody>
            <GroupFooter>剪贴板</GroupFooter>
          </Group>

          <Group $w={412}>
            <GroupBody $pad="15px 0 0 3px">
              <Column $gap={14}>
                <Row $gap={1}>
                  <Combo $w={158}>等线 (中文正文)<Caret /></Combo>
                  <Combo $w={75}>五号<Caret /></Combo>
                  <span style={{ width: 2 }} />
                  <Row $gap={4}>
                    <ButtonSet>
                      <Cell $w={30}><GrowFont size={25} up /></Cell>
                      <Cell $w={29}><GrowFont size={18} /></Cell>
                    </ButtonSet>
                    <ButtonSet><Cell $w={29}><ClearFormat /></Cell></ButtonSet>
                    <ButtonSet><Cell $w={29}><Phonetic /></Cell></ButtonSet>
                    <ButtonSet><Cell $w={30}><CharBorder /></Cell></ButtonSet>
                  </Row>
                </Row>
                <Row>
                  <ButtonSet>
                    <Cell $w={29} $on><Glyph $size={24} $bold $color="#000">B</Glyph></Cell>
                    <Cell $w={32}><Glyph $size={25} $italic $color="#000">I</Glyph></Cell>
                    <Cell $w={31} $on><Glyph $size={24} $line="underline" $color="#000">U</Glyph></Cell>
                    <Cell $w={14}><Caret /></Cell>
                    <Cell $w={32}><Glyph $size={18} $line="line-through" $bold>abc</Glyph></Cell>
                    <Cell $w={32}><ScriptIcon /></Cell>
                    <Cell $w={32}><ScriptIcon sup /></Cell>
                    <Cell $w={40} style={{ gap: 2 }}><Glyph $size={19} $bold>Aa</Glyph><Caret /></Cell>
                  </ButtonSet>
                  <ButtonSet>
                    <Cell $w={42}><Highlighter /><Caret /></Cell>
                    <Cell $w={43}><FontColor /><Caret /></Cell>
                  </ButtonSet>
                  <ButtonSet><Cell $w={29}><CharShade /></Cell></ButtonSet>
                  <ButtonSet><Cell $w={30}><CircledChar /></Cell></ButtonSet>
                </Row>
              </Column>
            </GroupBody>
            <GroupFooter>字体</GroupFooter>
          </Group>

          <Group $w={316}>
            <GroupBody $pad="17px 0 0 3px">
              <Column $gap={16}>
                <Row>
                  <ButtonSet>
                    <Cell $w={43}><ListIcon /><Caret /></Cell>
                    <Cell $w={44}><ListIcon numbered /><Caret /></Cell>
                    <Cell $w={40} style={{ gap: 2 }}><MultiLevel /><Caret /></Cell>
                  </ButtonSet>
                  <ButtonSet>
                    <Cell $w={30}><Indent out /></Cell>
                    <Cell $w={29}><Indent /></Cell>
                  </ButtonSet>
                  <ButtonSet><Cell $w={40} style={{ gap: 2 }}><AsianLayout /><Caret /></Cell></ButtonSet>
                  <ButtonSet><Cell $w={30}><SortIcon /></Cell></ButtonSet>
                  <ButtonSet><Cell $w={30}><ShowMarks /></Cell></ButtonSet>
                </Row>
                <Row>
                  <ButtonSet>
                    <Cell $w={29}><Lines rows={[full, [0, 15], full, [0, 17], full, [0, 13]]} /></Cell>
                    <Cell $w={32}><Lines rows={[full, [3, 19], full, [2, 20], full, [4, 18]]} /></Cell>
                    <Cell $w={32}><Lines rows={[full, [7, 22], full, [5, 22], full, [9, 22]]} /></Cell>
                    <Cell $w={31} $on><Lines rows={[full, full, full, full, full, full]} /></Cell>
                    <Cell $w={31}><Distribute /></Cell>
                  </ButtonSet>
                  <ButtonSet><Cell $w={40}><LineSpacing /><Caret /></Cell></ButtonSet>
                  <ButtonSet>
                    <Cell $w={42}><Bucket /><Caret /></Cell>
                    <Cell $w={43}><Borders /><Caret /></Cell>
                  </ButtonSet>
                </Row>
              </Column>
            </GroupBody>
            <GroupFooter>段落</GroupFooter>
          </Group>

          <Group $w={841}>
            <GroupBody $pad="4px 0 0 4px">
              <Gallery>
                {styleItems.map((s, i) => (
                  <StyleItem key={s.name} $on={i === 0}>
                    <Sample $size={s.size} $lh={s.lh} $weight={s.weight} $italic={s.italic} $gray={s.gray} $track={s.track}><span>{s.text}</span></Sample>
                    <StyleName>{s.mark && <Pilcrow size={8} color="#00156e" />}<span>{s.name}</span></StyleName>
                  </StyleItem>
                ))}
              </Gallery>
              <GalleryNav>
                <NavCell $off><Caret up color="#9c9c9c" /></NavCell>
                <NavCell><Caret /></NavCell>
                <NavCell>
                  <svg width="9" height="8" viewBox="0 0 9 8"><path d="M0 .500h9" stroke="#4a76b8" /><path d="M1 3.500h7L4.500 7.500z" fill="#4a76b8" /></svg>
                </NavCell>
              </GalleryNav>
              <BigButton $w={82}>
                <svg width="40" height="1" />
                <ChangeStyles />
                <span style={{ marginTop: 4 }}>更改样式</span>
                <svg width="7" height="8" />
                <Caret />
              </BigButton>
            </GroupBody>
            <GroupFooter>样式</GroupFooter>
          </Group>

          <Group $w={91}>
            <GroupBody $pad="0 0 0 6px">
              <Column>
                <SmallButton><Binoculars />查找<Caret /></SmallButton>
                <SmallButton><ReplaceIcon />替换</SmallButton>
                <SmallButton><SelectIcon />选择<Caret /></SmallButton>
              </Column>
            </GroupBody>
            <GroupLabel><LabelText style={{ padding: 0 }}>编辑</LabelText></GroupLabel>
          </Group>
        </Ribbon>
      </RibbonWrap>

      <Workspace>
        <Curves width="1200" height="774" viewBox="0 0 1200 774">
          <defs>
            <linearGradient id="haze" x1="0" y1="0" x2="0" y2="1">
              <stop offset="0" stopColor="#c6daf2" stopOpacity=".7" />
              <stop offset="1" stopColor="#b3cdf0" stopOpacity=".5" />
            </linearGradient>
          </defs>
          <path d="M0 0H700Q300 30 114 88 50 104 0 129z" fill="url(#haze)" />
          <path d="M0 158Q50 125 114 96V88Q50 104 0 129z" fill="#b9d0ee" fillOpacity=".35" />
          <path d="M0 158Q50 125 114 96" fill="none" stroke="#b5cdec" strokeOpacity=".7" />
        </Curves>
        <Paper>
          <Corner />
          <Corner $right />
          <Heading section="2">
            基因工程的基本操作程序（第<Fixed $w={31} $size={27}>2</Fixed>课时
            <Fixed $w={23.5} $align="flex-start">）</Fixed>
            <Fixed $w={22} $align="flex-end">（</Fixed>
            新教材新授课）
          </Heading>
          {items.map((it) => (
            <Line key={it.n}>
              <Fixed $w={15.5} $size={27} $align="flex-start">{it.n}</Fixed>
              <span>、{it.text}</span>
              <Time $gap={it.gap}>{it.time}</Time>
              <Mark />
            </Line>
          ))}
          <Line><Mark flush /></Line>
          <Heading section="3">基因工程的应用（新教材新授课）</Heading>
          <Line><Mark flush /></Line>
          <Heading section="4">蛋白质工程</Heading>
          <Line><Mark flush /></Line>
          <Line><Mark flush /></Line>
        </Paper>
        <ScrollColumn>
          <ScrollTop>
            <svg width="13" height="3"><rect width="13" height="3" fill="#3d4b70" /></svg>
            <svg width="19" height="18" viewBox="0 0 19 18">
              <path d="M1.500 4.500h4L4 1h5v3.500l-2 2h11v8h-4l-2 2.500-3-2.500H1.500z" fill="#f4eef2" stroke="#69748f" strokeWidth="1.300" />
              <path d="M8 9v1M12 8v5M15 9v1" stroke="#69748f" strokeWidth="1.500" />
            </svg>
          </ScrollTop>
          <Track>
            <svg width="14" height="7"><path d="M0 7h14L7 0z" fill="#47567f" /></svg>
            <Thumb>
              <svg width="8" height="8" shapeRendering="crispEdges"><path d="M0 .500h8M0 2.500h8M0 4.500h8M0 6.500h8" stroke="#7c8798" /></svg>
            </Thumb>
            <svg width="14" height="7"><path d="M0 0h14L7 7z" fill="#3f4c73" /></svg>
          </Track>
          <ScrollFoot>
            <svg width="8" height="10"><path d="M0 5h8L4 0zM0 10h8L4 5z" fill="#000" /></svg>
            <svg width="12" height="12"><circle cx="6" cy="6" r="5" fill="#a9a9a9" stroke="#111" strokeWidth="1.500" /><circle cx="5" cy="4.500" r="2" fill="#e5e5e5" /></svg>
            <svg width="8" height="10"><path d="M0 0h8L4 5zM0 5h8L4 10z" fill="#000" /></svg>
          </ScrollFoot>
          <SidePill width="18" height="94" viewBox="0 0 18 94">
            <path d="M9 1q2 0 8.500 6v80q-6.500 6-8.500 6t-8-6V7q6-6 8-6z" fill="#e3ecfd" stroke="#3a80ff" strokeWidth="1.500" />
          </SidePill>
        </ScrollColumn>
      </Workspace>

      <StatusBar>
        <StatusLeft>
          <StatusItem $w={92} $pad={8}>页面: 2/2</StatusItem>
          <StatusItem $w={98}>字数: 760</StatusItem>
          <StatusItem $w={197} $pad={8}><Proofing /><span>中文(简体<CenteredComma>，</CenteredComma>中国)</span></StatusItem>
          <StatusItem $w={55}>插入</StatusItem>
        </StatusLeft>
        <StatusRight>
          <ViewSet>
            <ViewCell $on><svg width="16" height="18" viewBox="0 0 16 18"><rect x=".5" y=".5" width="15" height="17" fill="#fff" stroke="#555" /><path d="M3 4.500h10M3 7.500h10M3 10.500h10M3 13.500h10" stroke="#666" /></svg></ViewCell>
            <ViewCell><svg width="17" height="18" viewBox="0 0 17 18"><path d="M.5 2h6l2 2 2-2h6v12h-6l-2 3-2-3h-6z" fill="#fff" stroke="#666" /><path d="M8.500 4v12M2.500 5h4M2.500 8h4M2.500 11h4M10.500 5h4M10.500 8h4M10.500 11h4" stroke="#666" strokeWidth="1.300" /></svg></ViewCell>
            <ViewCell><svg width="19" height="18" viewBox="0 0 19 18"><rect x=".5" y="2.500" width="12" height="12" fill="#fff" stroke="#555" /><path d="M3 5.500h7M3 8.500h7M3 11.500h5" stroke="#666" /><circle cx="13" cy="12.500" r="5" fill="#3a6cb5" /><path d="M10 12q3-4 5 0t-3 4z" fill="#4da04a" /></svg></ViewCell>
            <ViewCell><svg width="14" height="15" viewBox="0 0 14 15" stroke="#777" strokeWidth="1.700"><path d="M0 1h8M4 4h3M9 4h5M6 7h8M6 10h8M0 13.500h12" /></svg></ViewCell>
            <ViewCell><svg width="15" height="15" viewBox="0 0 15 15" stroke="#666" strokeWidth="1.800"><path d="M0 1h15M0 4.300h15M0 7.600h15M0 10.900h15M0 14h15" /></svg></ViewCell>
          </ViewSet>
          <ZoomText>140%</ZoomText>
          <ZoomSlider>
            <ZoomKnob />
            <svg width="152" height="22" viewBox="0 0 152 22">
              <path d="M0 11.500h152" stroke="#6281ae" /><path d="M0 12.500h152" stroke="#eef5ff" />
              <path d="M76.500 1.500h11v14l-5.500 5-5.500-5z" fill="#e4edfa" stroke="#5c7cab" strokeWidth="1.400" />
              <path d="M82 5v10" stroke="#7d98c0" strokeWidth="1.800" />
            </svg>
            <ZoomKnob plus />
          </ZoomSlider>
        </StatusRight>
      </StatusBar>

      <Taskbar>
        <Task $w={72}>
          <svg width="24" height="24" viewBox="0 0 24 24" fill="#fff"><path d="M0 3.500L10 2v9.500H0zM11 1.800L24 0v11.500H11zM0 12.500h10V22L0 20.500zM11 12.500h13V24l-13-1.800z" /></svg>
        </Task>
        <Task $w={80}><EdgeIcon /></Task>
        <Task $w={74} $pad="1px 5px 0 0"><FolderIcon /></Task>
        <Task $w={73} $on $pad="0 2px 0 0"><WordIcon /></Task>
        <Tray>
          <TrayText $w={80} $size={18}>54℃<br />CPU温度</TrayText>
          <TrayIcons>
            <svg width="18" height="10" viewBox="0 0 18 10"><path d="M0 9.500L9 .800l9 8.700" fill="none" stroke="#fff" strokeWidth="1.400" /></svg>
            <svg width="25" height="17" viewBox="0 0 25 17"><path d="M7.500 4h15v2.500h2v6h-2V16h-14v-5" fill="#fff" /><path d="M1 3v5h6V3zM2.500 0v3M5.500 0v3M4 8v4h4" fill="none" stroke="#fff" strokeWidth="1.300" /></svg>
            <svg width="20" height="20" viewBox="0 0 20 20" fill="none" stroke="#fff" strokeWidth="1.400"><path d="M1 19Q2 3 18 2" opacity=".75" /><path d="M5 19Q6 8 18 6.500M9.500 19Q10 12 18 11" /><rect x="15" y="16" width="3" height="3" fill="#fff" stroke="none" /></svg>
            <svg width="23" height="20" viewBox="0 0 23 20" fill="none" stroke="#fff" strokeWidth="1.300"><path d="M.7 6.500H4L9 1.500v17l-5-5H.700z" /><path d="M12 7q2 3 0 6" /><path d="M15.500 4.500q4 5.500 0 11M19 2q6 8 0 16" opacity=".45" /></svg>
            <svg width="25" height="24" viewBox="0 0 25 24" fill="none" stroke="#fff" strokeWidth="1.400"><path d="M11 18.500H7.500l-3 0H.700V.700h23v10M5 5.500h14M5 9.500h14M5 13.500h6" /><circle cx="17.500" cy="17" r="6" fill="#262626" /><path d="M14 17h7" /></svg>
            <svg width="21" height="22" viewBox="0 0 21 22" fill="none" stroke="#fff" strokeWidth="2.600"><path d="M1.500 6h18v9.500h-18zM10.500 0v22" /></svg>
          </TrayIcons>
          <TrayText $w={114} $size={19.3}>13:02<br />2026/2/20</TrayText>
          <ShowDesktop />
        </Tray>
      </Taskbar>
    </Screen>
  );
}
